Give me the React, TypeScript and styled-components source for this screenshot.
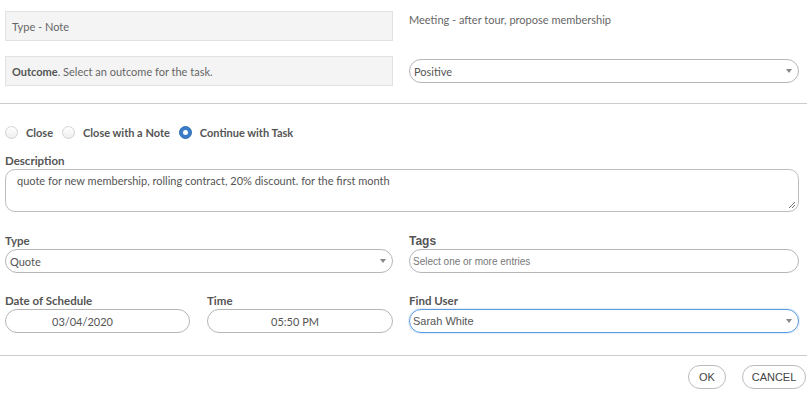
import React, { FC } from "react";
import styled, { createGlobalStyle, css } from "styled-components";

const GlobalStyle = createGlobalStyle`
  html, body {
    margin: 0;
    padding: 0;
    background: #ffffff;
  }
  body {
    font-family: "Lato", "Open Sans", sans-serif;
    color: #555555;
  }
`;

const Page = styled.div<{}>`
  width: 812px;
  height: 394px;
  box-sizing: border-box;
  padding-top: 11px;
`;

const Section = styled.div<{}>`
  padding: 0 13px 0 5px;
`;

const Grid = styled.div<{ $rowGap?: number }>`
  display: grid;
  grid-template-columns: 388px 390px;
  column-gap: 16px;
  row-gap: ${(p) => p.$rowGap ?? 0}px;
  align-items: center;
`;

const InfoBox = styled.div<{}>`
  height: 30px;
  box-sizing: border-box;
  background: #f4f4f4;
  border: 1px solid #e2e2e2;
  padding: 0 6px;
  display: flex;
  align-items: center;
  font-size: 11px;
  color: #666666;
  b {
    color: #555555;
    font-weight: 700;
  }
`;

const InfoText = styled.div<{}>`
  font-size: 11px;
  color: #666666;
  align-self: start;
  padding-top: 2px;
`;

const Divider = styled.hr<{}>`
  border: none;
  border-top: 1px solid #cccccc;
  margin: 0;
  width: 807px;
`;

const RadioRow = styled.div<{}>`
  display: flex;
  align-items: center;
  height: 20px;
  margin: 18px 0 0 5px;
  font-size: 11px;
  font-weight: 700;
  color: #555555;
`;

const RadioOption = styled.label<{}>`
  display: flex;
  align-items: center;
  margin-right: 9px;
`;

const RadioDot = styled.span<{ $checked?: boolean }>`
  width: 13px;
  height: 13px;
  box-sizing: border-box;
  border-radius: 50%;
  margin-right: 8px;
  ${(p) =>
    p.$checked
      ? css`
          background: #3a7cc7;
          border: 1px solid #2f6db3;
          display: flex;
          align-items: center;
          justify-content: center;
          &::after {
            content: "";
            width: 5px;
            height: 5px;
            border-radius: 50%;
            background: #ffffff;
          }
        `
      : css`
          background: linear-gradient(#ffffff, #eeeeee);
          border: 1px solid #d3d3d3;
        `}
`;

const Field = styled.div<{}>`
  display: flex;
  flex-direction: column;
`;

const Label = styled.div<{ $arial?: boolean }>`
  font-size: 11.5px;
  font-weight: 700;
  color: #555555;
  line-height: 14px;
  margin-bottom: 1px;
  ${(p) =>
    p.$arial &&
    css`
      font-family: "Liberation Sans", Arial, sans-serif;
      font-size: 12px;
    `}
`;

const TextArea = styled.div<{}>`
  height: 43px;
  box-sizing: border-box;
  border: 1px solid #bdbdbd;
  border-radius: 10px;
  padding: 4px 11px;
  font-size: 11px;
  color: #555555;
  position: relative;
`;

const Grip = styled.svg<{}>`
  position: absolute;
  right: 2px;
  bottom: 2px;
`;

const Pill = styled.div<{
  $focus?: boolean;
  $center?: boolean;
  $arial?: boolean;
  $muted?: boolean;
  $padRight?: number;
}>`
  height: 24px;
  box-sizing: border-box;
  border: 1px solid ${(p) => (p.$focus ? "#5a9ae0" : "#b5b5b5")};
  border-radius: 12px;
  display: flex;
  align-items: center;
  justify-content: ${(p) => (p.$center ? "center" : "space-between")};
  padding: 0 6px 0 4px;
  ${(p) =>
    p.$padRight !== undefined &&
    css`
      padding-right: ${p.$padRight}px;
    `}
  font-size: ${(p) => (p.$muted ? 10 : 11)}px;
  color: ${(p) => (p.$muted ? "#777777" : "#555555")};
  ${(p) =>
    p.$arial &&
    css`
      font-family: "Liberation Sans", Arial, sans-serif;
      padding-left: 3px;
    `}
  ${(p) =>
    p.$focus &&
    css`
      box-shadow: 0 0 2px rgba(90, 154, 224, 0.6);
    `}
`;

const Caret = styled.span<{}>`
  width: 0;
  height: 0;
  border-left: 3px solid transparent;
  border-right: 3px solid transparent;
  border-top: 4px solid #888888;
`;

const Footer = styled.div<{}>`
  display: flex;
  justify-content: flex-end;
  gap: 16px;
  padding: 9px 6px 0 0;
`;

const Button = styled.button<{ $width: number }>`
  width: ${(p) => p.$width}px;
  height: 24px;
  box-sizing: border-box;
  border: 1px solid #bbbbbb;
  border-radius: 12px;
  background: #ffffff;
  font-family: "Liberation Sans", Arial, sans-serif;
  font-size: 11px;
  color: #444444;
  padding: 0;
`;

const Select: FC<{ value: string; focus?: boolean; arial?: boolean }> = (props) => (
  <Pill $focus={props.focus} $arial={props.arial}>
    <span>{props.value}</span>
    <Caret />
  </Pill>
);

const App: FC = () => {
  return (
    <Page>
      <GlobalStyle />
      <Section>
        <Grid $rowGap={15}>
          <InfoBox>Type - Note</InfoBox>
          <InfoText>Meeting - after tour, propose membership</InfoText>
          <InfoBox>
            <b>Outcome</b>.&nbsp;Select an outcome for the task.
          </InfoBox>
          <Select value="Positive" />
        </Grid>
      </Section>
      <div style={{ height: 17 }} />
      <Divider />
      <RadioRow>
        <RadioOption>
          <RadioDot />
          Close
        </RadioOption>
        <RadioOption>
          <RadioDot />
          Close with a Note
        </RadioOption>
        <RadioOption>
          <RadioDot $checked />
          Continue with Task
        </RadioOption>
      </RadioRow>
      <Section style={{ marginTop: 12 }}>
        <Field>
          <Label>Description</Label>
          <TextArea>
            quote for new membership, rolling contract, 20% discount. for the first month
            <Grip width="8" height="8" viewBox="0 0 8 8">
              <path d="M7 1 L1 7 M7 4 L4 7" stroke="#777" strokeWidth="1" />
            </Grip>
          </TextArea>
        </Field>
        <Grid $rowGap={21} style={{ marginTop: 22, alignItems: "start" }}>
          <Field>
            <Label>Type</Label>
            <Select value="Quote" />
          </Field>
          <Field>
            <Label $arial>Tags</Label>
            <Pill $arial $muted>
              <span>Select one or more entries</span>
            </Pill>
          </Field>
          <Grid style={{ gridTemplateColumns: "185px 186px", columnGap: 17 }}>
            <Field>
              <Label>Date of Schedule</Label>
              <Pill $center $padRight={34}>
                03/04/2020
              </Pill>
            </Field>
            <Field>
              <Label>Time</Label>
              <Pill $center $padRight={14}>
                05:50 PM
              </Pill>
            </Field>
          </Grid>
          <Field>
            <Label>Find User</Label>
            <Select value="Sarah White" focus arial />
          </Field>
        </Grid>
      </Section>
      <div style={{ height: 22 }} />
      <Divider />
      <Footer>
        <Button $width={38}>OK</Button>
        <Button $width={64}>CANCEL</Button>
      </Footer>
    </Page>
  );
};

export default App;
